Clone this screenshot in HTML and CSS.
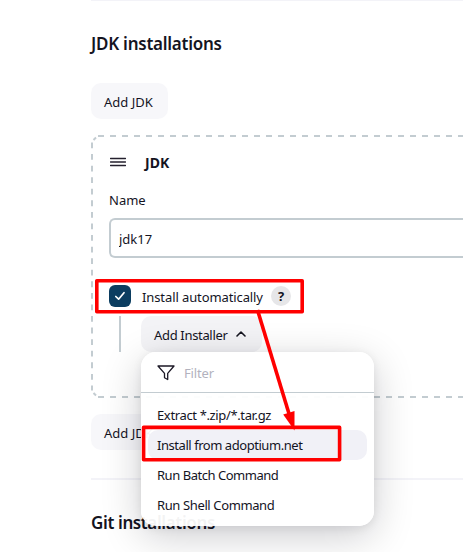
FILE: index.html
```html
<!DOCTYPE html>
<html lang="en">
<head>
<meta charset="utf-8">
<title>Tools</title>
<link rel="stylesheet" href="styles.css">
</head>
<body>
<main class="page">
  <section class="section">
    <h2 class="heading"><span class="heading-jdk">JDK installations</span></h2>
    <button class="button add"><span class="t-add">Add JDK</span></button>
    <div class="panel">
      <svg class="outline" width="372" height="263" viewBox="0 0 372 263" fill="none" stroke="#c3ccd1" stroke-width="2">
        <path d="M7 1H372M7 262H372" stroke-dasharray="6 6"/>
        <path d="M1 7.500V255.500" stroke-dasharray="5.800 5.770"/>
        <path d="M2.500 5L5 2.500M2.500 258L5 260.500"/>
      </svg>
      <div class="panel-head">
        <svg width="16" height="10" viewBox="0 0 16 10"><path d="M.5 1.500h15M.5 5h15M.5 8.500h15" stroke="#24202e" stroke-width="1.400" stroke-linecap="round"/></svg>
        <b>JDK</b>
      </div>
      <label class="label" for="name">Name</label>
      <input class="input" id="name" value="jdk17">
      <div class="check-row">
        <span class="checkbox"><svg width="22" height="22" viewBox="0 0 22 22"><path d="M6.8 11.5l2.8 2.7 5.4-6.5" fill="none" stroke="#fff" stroke-width="1.7" stroke-linecap="round" stroke-linejoin="round"/></svg></span>
        <span class="t-auto">Install automatically</span>
        <span class="help">?</span>
      </div>
      <div class="nested">
        <div class="installer">
          <button class="button installer-button"><span class="t-installer">Add Installer</span><svg width="10" height="6" viewBox="0 0 10 6"><path d="M1 5l4-4 4 4" fill="none" stroke="#14141f" stroke-width="1.6" stroke-linecap="round" stroke-linejoin="round"/></svg></button>
          <div class="menu">
            <div class="filter">
              <svg width="18" height="16" viewBox="0 0 18 16"><path d="M1 1h16l-6.3 7.4v6.1l-3.2-1.7V8.400L1 1z" fill="none" stroke="#1c1926" stroke-width="1.3" stroke-linejoin="round"/></svg>
              <span class="t-filter">Filter</span>
            </div>
            <div class="items">
              <div class="item"><span class="t-extract">Extract *.zip/*.tar.gz</span></div>
              <div class="item active"><span class="t-adopt">Install from adoptium.net</span></div>
              <div class="item"><span class="t-batch">Run Batch Command</span></div>
              <div class="item"><span class="t-shell">Run Shell Command</span></div>
            </div>
          </div>
        </div>
      </div>
    </div>
    <button class="button add add-after"><span class="t-add">Add JDK</span></button>
  </section>
  <section class="section git">
    <h2 class="heading"><span class="heading-git">Git installations</span></h2>
  </section>
</main>
<svg class="annotations" width="463" height="552" viewBox="0 0 463 552">
  <g fill="none" stroke="#f00" stroke-width="3.6">
    <rect x="96.800" y="280.800" width="205.400" height="31" stroke-linejoin="round"/>
    <rect x="143.600" y="427.400" width="196" height="32.400" stroke-linejoin="round"/>
    <path d="M257.500 310L290 417"/>
  </g>
  <path d="M294.500 430.500L283.200 414.500L294.500 411z" fill="#f00"/>
</svg>
</body>
</html>
```
FILE: styles.css
```css
* { box-sizing: border-box; }
body {
  margin: 0;
  height: 552px;
  overflow: hidden;
  position: relative;
  background: #fff;
  color: #14141f;
  font: 13px/20px "Noto Sans", "Open Sans", sans-serif;
}
.page { width: 463px; padding-left: 91px; }
.section { border-top: 2px solid #f3f3f8; margin-top: -1px; }
.heading { margin: 0; padding-top: 31px; font: 600 17px/24px "Noto Sans", sans-serif; white-space: nowrap; }
.heading-jdk { letter-spacing: -.25px; }
.heading-git { letter-spacing: -.38px; }
.section span { white-space: nowrap; }
.button {
  display: flex;
  align-items: center;
  height: 36px;
  border: 0;
  border-radius: 10px;
  padding: 2px 13px 0;
  background: #f7f7fa;
  color: inherit;
  font: inherit;
}
.add { width: 77px; margin-top: 27px; }
.panel {
  position: relative;
  height: 263px;
  margin-top: 16px;
  padding: 17px 0 0 18px;
}
.outline { position: absolute; top: 0; left: 0; }
.panel-head { display: flex; align-items: center; gap: 19px; height: 20px; padding-left: 1px; }
.panel-head b { font-size: 14px; padding-top: 1px; }
.label { display: block; margin-top: 18px; }
.input {
  display: block;
  width: 100%;
  height: 40px;
  margin-top: 8px;
  padding: 1px 8px 0;
  border: 2px solid #c3ccd1;
  border-right: 0;
  border-radius: 6px 0 0 6px;
  background: #fff;
  color: inherit;
  font: inherit;
}
.check-row { display: flex; align-items: center; height: 22px; margin-top: 27px; }
.checkbox { width: 22px; height: 22px; margin-right: 11px; border-radius: 6px; background: #0b3d60; }
.checkbox svg { display: block; }
.t-auto { width: 121px; letter-spacing: -.1px; padding-top: 1px; }
.help {
  width: 20px;
  height: 20px;
  margin-left: 8px;
  border-radius: 50%;
  background: #e6e6e8;
  font-weight: 700;
  font-size: 13px;
  text-align: center;
}
.nested { height: 36px; margin: 9px 0 0 10px; border-left: 2px solid #c3ccd1; padding-left: 20px; }
.installer { position: relative; width: 121px; }
.installer-button { width: 121px; gap: 9px; background: #f3f3f6; }
.installer-button svg { margin-top: -3px; }
.t-installer { width: 73px; letter-spacing: -.33px; }
.menu {
  position: absolute;
  z-index: 2;
  top: 36px;
  left: 0;
  width: 233px;
  height: 174px;
  border-radius: 15px;
  background: rgba(255, 255, 255, .95);
  box-shadow: 0 10px 40px rgba(0, 0, 20, .2), 0 2px 10px rgba(0, 0, 20, .08);
}
.filter { display: flex; align-items: center; gap: 9px; height: 41px; padding: 1px 16px 0; border-bottom: 1px solid #c3ccd1; color: #b2b2be; }
.t-filter { letter-spacing: -.15px; }
.items { padding: 7px; }
.item { display: flex; align-items: center; height: 30px; padding: 0 9px 1px; border-radius: 10px; }
.active { background: #f1f1f7; }
.t-extract { letter-spacing: -.36px; }
.t-adopt { letter-spacing: -.45px; }
.t-batch { letter-spacing: -.47px; }
.t-shell { letter-spacing: -.38px; }
.add-after { margin-top: 16px; }
.git { margin-top: 28px; }
.annotations { position: absolute; z-index: 3; top: 0; left: 0; }
```
